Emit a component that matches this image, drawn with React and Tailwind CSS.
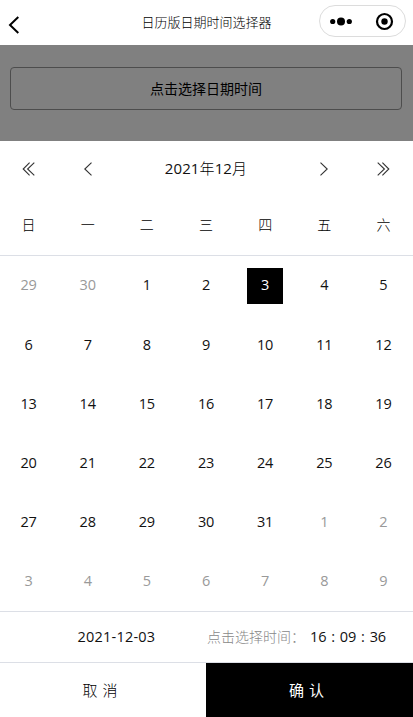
import React from "react";

const weekdays = ["日", "一", "二", "三", "四", "五", "六"];

const days = [
  { n: 29, out: true },
  { n: 30, out: true },
  ...Array.from({ length: 31 }, (_, i) => ({ n: i + 1, out: false })),
  ...Array.from({ length: 9 }, (_, i) => ({ n: i + 1, out: true })),
];

function Chevron({ double = false, flip = false }) {
  return (
    <svg
      width="14"
      height="14"
      viewBox="0 0 14 14"
      fill="none"
      stroke="#333"
      strokeWidth="1.1"
      className={flip ? "-scale-x-100" : ""}
    >
      {double ? (
        <path d="M7.6 0.7L1.2 7l6.4 6.3M12.3 0.7L5.6 7l6.7 6.3" />
      ) : (
        <path d="M10.5 0.6L3.8 7l6.7 6.4" />
      )}
    </svg>
  );
}

function Header() {
  return (
    <header className="relative flex h-[45px] shrink-0 items-center justify-center bg-white">
      <svg
        className="absolute left-[8px] top-[16px]"
        width="12"
        height="18"
        viewBox="0 0 12 18"
        fill="none"
        stroke="#000"
        strokeWidth="2"
      >
        <path d="M10.3 1L2 9l8.3 8" />
      </svg>
      <h1 className="pb-px text-[13px] font-light leading-[20px] text-black">日历版日期时间选择器</h1>
      <div className="absolute left-[319px] top-[5px] h-[32px] w-[87px] rounded-full border border-[#dcdcdc]">
        <svg width="85" height="30" viewBox="0 0 85 30">
          <circle cx="12.7" cy="15.5" r="2.6" />
          <circle cx="21" cy="15.5" r="4" />
          <circle cx="29.3" cy="15.5" r="2.6" />
          <circle cx="64.5" cy="15.5" r="7.5" fill="none" stroke="#000" strokeWidth="2.2" />
          <circle cx="64.5" cy="15.5" r="3.2" />
        </svg>
      </div>
    </header>
  );
}

export default function App() {
  return (
    <div className="flex h-[717px] w-[413px] flex-col overflow-hidden bg-white font-['Open_Sans','Noto_Sans_CJK_SC',sans-serif] text-[#111]">
      <Header />
      <div className="h-24 shrink-0 bg-[#808080] pl-[10px] pr-[11px] pt-[22px]">
        <div className="flex h-[43px] items-center justify-center rounded-[4px] border border-[#4d4d4d] text-[14px] text-black">
          点击选择日期时间
        </div>
      </div>
      <div className="-ml-px grid h-[55px] w-[414px] shrink-0 grid-cols-7 place-items-center">
        <Chevron double />
        <Chevron />
        <div className="col-span-3 text-[15px] tracking-[0.1px]">
          2021<span className="font-light text-black">年</span>12<span className="font-light text-black">月</span>
        </div>
        <Chevron flip />
        <Chevron double flip />
      </div>
      <div className="h-[60px] w-full shrink-0 border-b border-[#dcdfe6]">
        <div className="-ml-px grid h-14 w-[414px] grid-cols-7 place-items-center text-[14px] font-light text-black">
          {weekdays.map((d) => (
            <span key={d}>{d}</span>
          ))}
        </div>
      </div>
      <div className="-ml-px grid h-[355px] w-[414px] shrink-0 grid-cols-7 grid-rows-6 place-items-center pb-px text-[14.5px] tracking-[-0.2px]">
        {days.map((d, i) => {
          const selected = !d.out && d.n === 3;
          const color = d.out ? "text-[#999]" : "text-[#111]";
          return (
            <span
              key={i}
              className={
                selected
                  ? "flex h-9 w-9 items-center justify-center bg-black pb-0.5 text-white"
                  : i < 7
                    ? `pb-0.5 ${color}`
                    : color
              }
            >
              {d.n}
            </span>
          );
        })}
      </div>
      <div className="flex h-[52px] shrink-0 items-center border-y border-[#dcdfe6] pb-px text-[14.5px]">
        <span className="w-[129px] whitespace-nowrap pl-[77.5px] tracking-[0.22px]">2021-12-03</span>
        <span className="ml-[78px] w-[103px] whitespace-nowrap text-[14px] font-light text-[#888]">点击选择时间：</span>
        <span className="whitespace-nowrap tracking-[-0.1px] [word-spacing:1.2px]">16 : 09 : 36</span>
      </div>
      <div className="flex h-[54px] shrink-0 text-[15px]">
        <button className="w-[206px] pr-[6px] font-light text-black [word-spacing:1px]">取 消</button>
        <button className="flex-1 bg-black pr-[6px] text-white [word-spacing:1px]">确 认</button>
      </div>
    </div>
  );
}
